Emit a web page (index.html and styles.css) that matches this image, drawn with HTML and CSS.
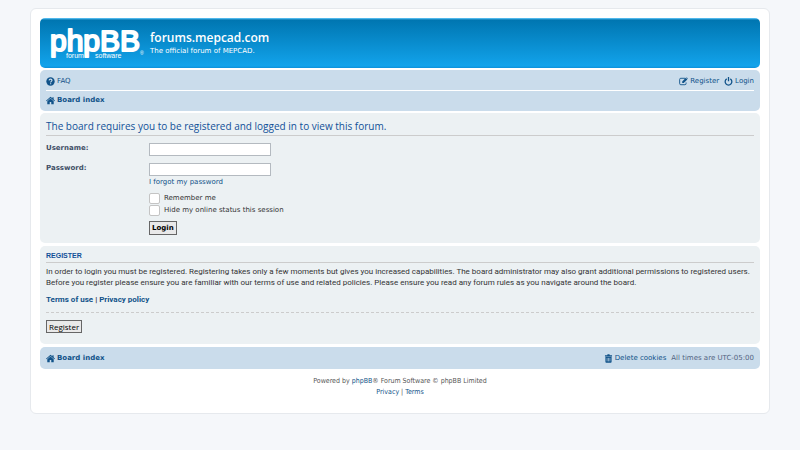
FILE: index.html
```
<!DOCTYPE html>
<html lang="en">
  <head>
    <meta charset="UTF-8" />
    <title>forums.mepcad.com - Login</title>
    <link rel="stylesheet" href="styles.css">
  </head>
  <body>
    <div id="wrap" class="wrap">
      <header class="headerbar">
        <a class="logo" href="#" aria-label="Board index">
          <svg width="97" height="36" viewBox="0 0 97 36">
            <text class="logo-name" x="2" y="26">phpBB</text>
            <text class="logo-sub" x="18" y="33">forum</text>
            <text class="logo-sub" x="47" y="33">software</text>
            <text class="logo-reg" x="92" y="30">®</text>
          </svg>
        </a>
        <div class="site-description">
          <h1>forums.mepcad.com</h1>
          <p>The official forum of MEPCAD.</p>
        </div>
      </header>

      <nav class="navbar">
        <div class="nav-row nav-main">
          <a href="#">
            <svg class="icon" viewBox="0 0 14 14"><circle cx="7" cy="7" r="6.5"/><path class="cut" d="M4.800 5.200C5 3.900 5.900 3.300 7 3.300c1.300 0 2.300.8 2.300 1.900 0 1.500-2.100 1.600-2.100 3.200M7.200 9.700v1.700"/></svg>
            FAQ
          </a>
          <div class="nav-right">
            <a href="#">
              <svg class="icon" viewBox="0 0 14 14"><path class="line" d="M9.500 2H2.800A1.800 1.800 0 0 0 1 3.800v6.400A1.800 1.800 0 0 0 2.800 12h6.400a1.800 1.800 0 0 0 1.800-1.800V8.500"/><path d="M5 7l5.600-5.700 2.400 2.400L7.400 9.400H5zM11.200.8l.6-.5 2.200 2.200-.5.600z"/></svg>
              Register
            </a>
            <a href="#">
              <svg class="icon" viewBox="0 0 14 14"><path class="line thick" d="M4.200 2.900a5.200 5.200 0 1 0 5.600 0M7 0v6.500"/></svg>
              Login
            </a>
          </div>
        </div>
        <div class="nav-row">
          <a class="crumb" href="#">
            <svg class="icon" viewBox="0 0 14 14"><path d="M7 1L0 7.200l.9 1L7 3l6.100 5.200.9-1-2.200-2V2H10v1.600zM7 4L2 8.200V13h3.800V9.500h2.400V13H12V8.200z"/></svg>
            Board index
          </a>
        </div>
      </nav>

      <form class="panel login-panel">
        <h2>The board requires you to be registered and logged in to view this forum.</h2>
        <div class="fields">
          <label class="name" for="username">Username:</label>
          <input type="text" id="username" class="inputbox">
          <label class="name" for="password">Password:</label>
          <div>
            <input type="password" id="password" class="inputbox">
            <a class="forgot" href="#">I forgot my password</a>
          </div>
          <div class="checks">
            <label><input type="checkbox"> Remember me</label>
            <label><input type="checkbox"> Hide my online status this session</label>
          </div>
          <button type="button" class="button button-login">Login</button>
        </div>
      </form>

      <section class="panel register-panel">
        <h3>Register</h3>
        <p>In order to login you must be registered. Registering takes only a few moments but gives you increased capabilities. The board administrator may also grant additional permissions to registered users. Before you register please ensure you are familiar with our terms of use and related policies. Please ensure you read any forum rules as you navigate around the board.</p>
        <p class="terms"><a href="#">Terms of use</a> | <a href="#">Privacy policy</a></p>
        <hr>
        <button type="button" class="button">Register</button>
      </section>

      <footer>
        <div class="navbar footer-nav">
          <div class="nav-row">
            <a class="crumb" href="#">
              <svg class="icon" viewBox="0 0 14 14"><path d="M7 1L0 7.200l.9 1L7 3l6.100 5.200.9-1-2.200-2V2H10v1.600zM7 4L2 8.200V13h3.800V9.500h2.400V13H12V8.200z"/></svg>
              Board index
            </a>
            <div class="nav-right">
              <a href="#">
                <svg class="icon" viewBox="0 0 14 14"><path d="M1.500 2H5l.5-1.500h3L9 2h3.500v1.700h-11z"/><path d="M2.200 4.300h9.600V12a1.400 1.400 0 0 1-1.400 1.500H3.600A1.400 1.400 0 0 1 2.200 12z"/><path class="slats" d="M4.800 6v5.500M7 6v5.500M9.200 6v5.500"/></svg>
                Delete cookies
              </a>
              <span>All times are UTC-05:00</span>
            </div>
          </div>
        </div>
        <div class="copyright">
          <p>Powered by <a href="#">phpBB</a>® Forum Software © phpBB Limited</p>
          <p><a href="#">Privacy</a> | <a href="#">Terms</a></p>
        </div>
      </footer>
    </div>
  </body>
</html>
```
FILE: styles.css
```
* {
  margin: 0;
  padding: 0;
  box-sizing: border-box;
}

body {
  padding: 8px 30px;
  background: #f5f7fa;
  color: #536482;
  font: 7px/9px "DejaVu Sans", Verdana, sans-serif;
}

a {
  color: #105289;
  text-decoration: none;
}

a:hover {
  color: #d31141;
  text-decoration: underline;
}

.wrap {
  max-width: 1152px;
  margin: 0 auto;
  padding: 9px;
  background: #fff;
  border: 1px solid #e6e9ed;
  border-radius: 6px;
}

.headerbar {
  display: flex;
  align-items: flex-start;
  gap: 5px;
  margin-bottom: 2px;
  padding: 7px 8px;
  background: #12a3eb;
  background: linear-gradient(#6aceff 0, #0076b1 2px, #12a3eb 96%, #0d8fd8);
  border-radius: 5px;
  color: #fff;
}

.logo svg {
  display: block;
}

.logo text {
  fill: #fff;
  font-family: "Liberation Sans", Arial, sans-serif;
}

.logo .logo-name {
  font-size: 30px;
  stroke: #fff;
  stroke-width: 2;
  stroke-linejoin: round;
}

.logo .logo-sub {
  font-size: 7px;
}

.logo .logo-reg {
  font-size: 5px;
}

.site-description {
  padding-top: 5px;
}

h1 {
  font: 600 12px/16px "Open Sans", "Trebuchet MS", sans-serif;
}

.site-description p {
  line-height: 10px;
}

.navbar {
  margin-bottom: 2px;
  padding: 2px 6px;
  background: #cadceb;
  border-radius: 5px;
}

.nav-row {
  display: flex;
  align-items: center;
  justify-content: space-between;
  min-height: 18px;
}

.nav-row a {
  display: flex;
  align-items: center;
  gap: 2px;
}

.nav-main {
  min-height: 19px;
  border-bottom: 1px solid #fff;
}

.nav-right {
  display: flex;
  align-items: center;
  gap: 5px;
}

.icon {
  width: 9px;
  height: 9px;
  fill: #105289;
}

.icon .line,
.icon .cut {
  fill: none;
  stroke: #105289;
  stroke-width: 1.4;
}

.icon .thick {
  stroke-width: 2;
}

.icon .cut {
  stroke: #cadceb;
  stroke-width: 1.8;
}

.icon .slats {
  stroke: #cadceb;
}

.crumb {
  font-weight: bold;
}

.panel {
  margin-bottom: 3px;
  padding: 6px;
  background: #ecf1f3;
  border-radius: 5px;
  color: #333;
}

h2 {
  padding-bottom: 2px;
  border-bottom: 1px solid #ccc;
  color: #115098;
  font: 10px/14px "Open Sans", "Trebuchet MS", sans-serif;
}

.fields {
  display: grid;
  grid-template-columns: 98px 1fr;
  gap: 5px;
  padding: 7px 0 2px;
}

.fields .name {
  padding-top: 1px;
  color: #425067;
  font-weight: bold;
}

.inputbox {
  display: block;
  width: 122px;
  height: 13px;
  margin-bottom: 2px;
  border: 1px solid #b4bac0;
  background: #fff;
}

.forgot {
  display: block;
}

.checks,
.button-login {
  grid-column: 2;
}

.checks label {
  display: flex;
  align-items: center;
  gap: 4px;
  height: 12px;
}

.checks input {
  appearance: none;
  width: 11px;
  height: 11px;
  background: #fff;
  border: 1px solid #c4c4c4;
  border-radius: 2px;
}

.button {
  display: block;
  justify-self: start;
  padding: 1px 2px;
  border: 1px solid #666;
  background: #e9e9e9;
  color: #000;
  font: 8px/9px "Open Sans", "Trebuchet MS", sans-serif;
}

.button-login {
  font: bold 7px/10px "DejaVu Sans", Verdana, sans-serif;
}

h3 {
  margin-bottom: 3px;
  padding-bottom: 2px;
  border-bottom: 1px solid #ccc;
  color: #115098;
  font: bold 7px/8px "Liberation Sans", Arial, sans-serif;
  text-transform: uppercase;
}

.register-panel {
  padding-bottom: 11px;
}

.register-panel p {
  font: 8px/11px Roboto, "Trebuchet MS", sans-serif;
}

.register-panel .terms {
  margin: 6px 0 7px;
  font-weight: bold;
}

hr {
  margin-bottom: 7px;
  border: 0;
  border-top: 1px dashed #ccc;
}

.copyright {
  padding: 5px 0 6px;
  color: #555;
  font: 7px/11px "DejaVu Sans Condensed", Verdana, sans-serif;
  text-align: center;
}
```
